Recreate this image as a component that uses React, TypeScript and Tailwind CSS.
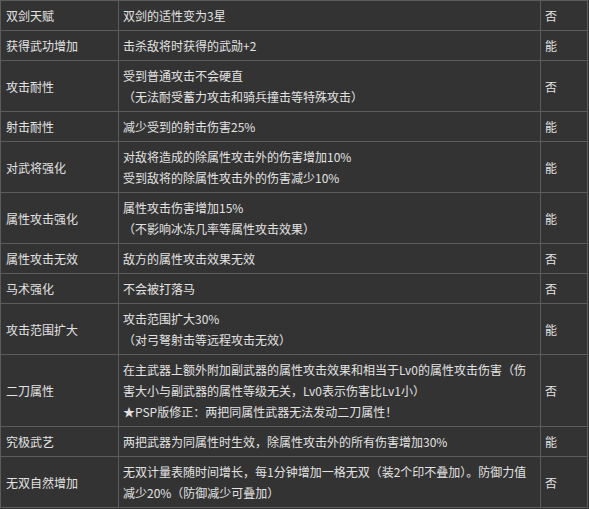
const rows: { name: string; desc: string[]; ok: string }[] = [
  { name: "双剑天赋", desc: ["双剑的适性变为3星"], ok: "否" },
  { name: "获得武功增加", desc: ["击杀敌将时获得的武勋+2"], ok: "能" },
  {
    name: "攻击耐性",
    desc: ["受到普通攻击不会硬直", "（无法耐受蓄力攻击和骑兵撞击等特殊攻击）"],
    ok: "否",
  },
  { name: "射击耐性", desc: ["减少受到的射击伤害25%"], ok: "能" },
  {
    name: "对武将强化",
    desc: ["对敌将造成的除属性攻击外的伤害增加10%", "受到敌将的除属性攻击外的伤害减少10%"],
    ok: "能",
  },
  {
    name: "属性攻击强化",
    desc: ["属性攻击伤害增加15%", "（不影响冰冻几率等属性攻击效果）"],
    ok: "能",
  },
  { name: "属性攻击无效", desc: ["敌方的属性攻击效果无效"], ok: "否" },
  { name: "马术强化", desc: ["不会被打落马"], ok: "否" },
  {
    name: "攻击范围扩大",
    desc: ["攻击范围扩大30%", "（对弓弩射击等远程攻击无效）"],
    ok: "能",
  },
  {
    name: "二刀属性",
    desc: [
      "在主武器上额外附加副武器的属性攻击效果和相当于Lv0的属性攻击伤害（伤",
      "害大小与副武器的属性等级无关，Lv0表示伤害比Lv1小）",
      "★PSP版修正：两把同属性武器无法发动二刀属性！",
    ],
    ok: "否",
  },
  { name: "究极武艺", desc: ["两把武器为同属性时生效，除属性攻击外的所有伤害增加30%"], ok: "能" },
  {
    name: "无双自然增加",
    desc: ["无双计量表随时间增长，每1分钟增加一格无双（装2个印不叠加）。防御力值", "减少20%（防御减少可叠加）"],
    ok: "否",
  },
];

function App() {
  return (
    <div
      className="min-h-[509px] w-[589px] bg-[#333333] text-[12px] leading-[21px] text-[#e2e2e2]"
      style={{ fontFamily: '"Noto Sans CJK SC", "Noto Sans", sans-serif' }}
    >
      <table className="w-[588px] table-fixed border-collapse">
        <colgroup>
          <col className="w-[118px]" />
          <col className="w-[422px]" />
          <col className="w-[47px]" />
        </colgroup>
        <tbody>
          {rows.map((r) => (
            <tr key={r.name}>
              <td className="border border-[#5c5c5c] px-[5px] py-1 align-middle whitespace-nowrap">{r.name}</td>
              <td className="border border-[#5c5c5c] px-[4px] py-1 align-middle whitespace-nowrap">
                {r.desc.map((d, i) => (
                  <div key={i}>{d}</div>
                ))}
              </td>
              <td className="border border-[#5c5c5c] px-[4px] py-1 align-middle">{r.ok}</td>
            </tr>
          ))}
        </tbody>
      </table>
    </div>
  );
}

export default App;
